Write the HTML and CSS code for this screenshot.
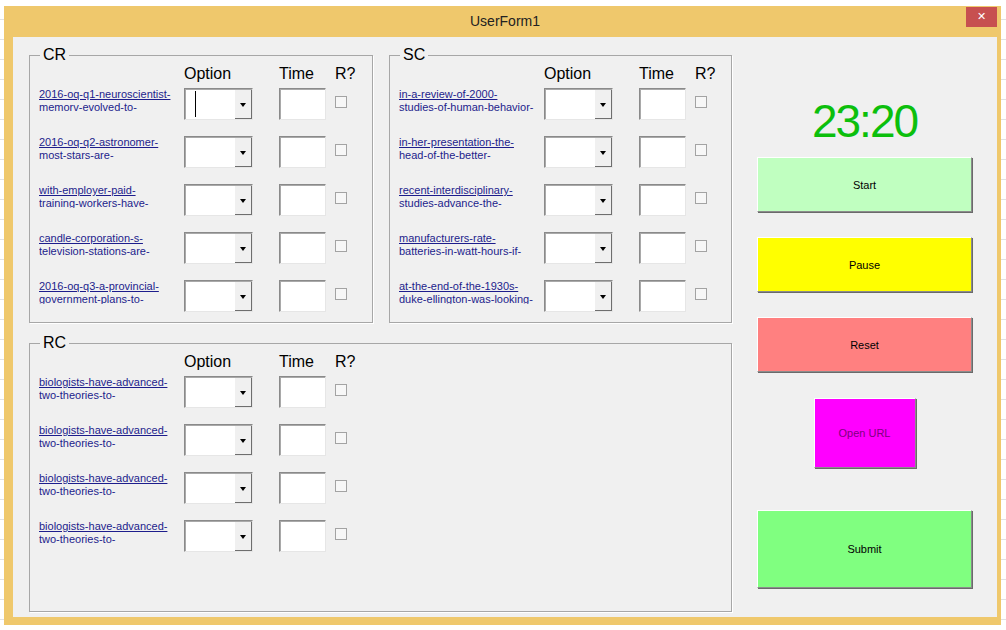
FILE: index.html
```html
<html>
  <head>
    <meta charset="utf-8" />
    <title>UserForm1</title>
    <link rel="stylesheet" href="styles.css">
  </head>
  <body>
    <div class="window">
      <div class="titlebar">
        <span></span>
        <span class="title">UserForm1</span>
        <button class="close">&#x2715;</button>
      </div>
      <div class="client">
        <div class="sections">
          <div class="top-row">
            <div class="frame frame-cr">
              <span class="frame-title">CR</span>
              <div class="qhead">
                <span></span><span>Option</span><span>Time</span><span>R?</span>
              </div>
              <div class="qrows">
                <div class="qrow">
                  <a class="qlink"><u>2016-oq-q1-neuroscientist-</u>memorv-evolved-to-</a>
                  <div class="combo"><span class="caret"></span><span class="drop"></span></div>
                  <div class="textbox"></div>
                  <div class="check"></div>
                </div>
                <div class="qrow">
                  <a class="qlink"><u>2016-oq-q2-astronomer-</u>most-stars-are-</a>
                  <div class="combo"><span></span><span class="drop"></span></div>
                  <div class="textbox"></div>
                  <div class="check"></div>
                </div>
                <div class="qrow">
                  <a class="qlink"><u>with-employer-paid-</u>training-workers-have-</a>
                  <div class="combo"><span></span><span class="drop"></span></div>
                  <div class="textbox"></div>
                  <div class="check"></div>
                </div>
                <div class="qrow">
                  <a class="qlink"><u>candle-corporation-s-</u>television-stations-are-</a>
                  <div class="combo"><span></span><span class="drop"></span></div>
                  <div class="textbox"></div>
                  <div class="check"></div>
                </div>
                <div class="qrow">
                  <a class="qlink"><u>2016-oq-q3-a-provincial-</u>government-plans-to-</a>
                  <div class="combo"><span></span><span class="drop"></span></div>
                  <div class="textbox"></div>
                  <div class="check"></div>
                </div>
              </div>
            </div>

            <div class="frame frame-sc">
              <span class="frame-title">SC</span>
              <div class="qhead">
                <span></span><span>Option</span><span>Time</span><span>R?</span>
              </div>
              <div class="qrows">
                <div class="qrow">
                  <a class="qlink"><u>in-a-review-of-2000-</u>studies-of-human-behavior-</a>
                  <div class="combo"><span></span><span class="drop"></span></div>
                  <div class="textbox"></div>
                  <div class="check"></div>
                </div>
                <div class="qrow">
                  <a class="qlink"><u>in-her-presentation-the-</u>head-of-the-better-</a>
                  <div class="combo"><span></span><span class="drop"></span></div>
                  <div class="textbox"></div>
                  <div class="check"></div>
                </div>
                <div class="qrow">
                  <a class="qlink"><u>recent-interdisciplinary-</u>studies-advance-the-</a>
                  <div class="combo"><span></span><span class="drop"></span></div>
                  <div class="textbox"></div>
                  <div class="check"></div>
                </div>
                <div class="qrow">
                  <a class="qlink"><u>manufacturers-rate-</u>batteries-in-watt-hours-if-</a>
                  <div class="combo"><span></span><span class="drop"></span></div>
                  <div class="textbox"></div>
                  <div class="check"></div>
                </div>
                <div class="qrow">
                  <a class="qlink"><u>at-the-end-of-the-1930s-</u>duke-ellington-was-looking-</a>
                  <div class="combo"><span></span><span class="drop"></span></div>
                  <div class="textbox"></div>
                  <div class="check"></div>
                </div>
              </div>
            </div>
          </div>

          <div class="frame frame-rc">
            <span class="frame-title">RC</span>
            <div class="qhead">
              <span></span><span>Option</span><span>Time</span><span>R?</span>
            </div>
            <div class="qrows">
              <div class="qrow">
                <a class="qlink"><u>biologists-have-advanced-</u>two-theories-to-</a>
                <div class="combo"><span></span><span class="drop"></span></div>
                <div class="textbox"></div>
                <div class="check"></div>
              </div>
              <div class="qrow">
                <a class="qlink"><u>biologists-have-advanced-</u>two-theories-to-</a>
                <div class="combo"><span></span><span class="drop"></span></div>
                <div class="textbox"></div>
                <div class="check"></div>
              </div>
              <div class="qrow">
                <a class="qlink"><u>biologists-have-advanced-</u>two-theories-to-</a>
                <div class="combo"><span></span><span class="drop"></span></div>
                <div class="textbox"></div>
                <div class="check"></div>
              </div>
              <div class="qrow">
                <a class="qlink"><u>biologists-have-advanced-</u>two-theories-to-</a>
                <div class="combo"><span></span><span class="drop"></span></div>
                <div class="textbox"></div>
                <div class="check"></div>
              </div>
            </div>
          </div>
        </div>

        <div class="controls">
          <div class="timer">23:20</div>
          <button class="btn start">Start</button>
          <button class="btn pause">Pause</button>
          <button class="btn reset">Reset</button>
          <button class="btn open-url">Open URL</button>
          <button class="btn submit">Submit</button>
        </div>
      </div>
    </div>
  </body>
</html>
```

FILE: styles.css
```css
body {
  margin: 0;
  background: repeating-linear-gradient(to bottom, #fff 0, #fff 19px, #e2e2e2 19px, #e2e2e2 20px);
  font-family: "Liberation Sans", Arial, sans-serif;
  overflow: hidden;
}
.window {
  margin: 6px 0 0 4px;
  width: 997px;
  height: 619px;
  box-sizing: border-box;
  background: #efc86c;
  padding: 0 4px 8px 9px;
}
.titlebar {
  display: grid;
  grid-template-columns: 1fr auto 1fr;
  height: 31px;
}
.title {
  font-size: 14px;
  color: #222;
  line-height: 31px;
}
.close {
  justify-self: end;
  width: 31px;
  height: 20px;
  margin-top: 1px;
  border: 0;
  padding: 0;
  background: #c75050;
  color: #fff;
  font-size: 11px;
  font-family: "DejaVu Sans", sans-serif;
  line-height: 20px;
}
.client {
  display: flex;
  height: 580px;
  background: #f0f0f0;
  padding: 18px 0 0 16px;
  box-sizing: border-box;
}
.top-row {
  display: flex;
  gap: 16px;
}
.frame {
  position: relative;
  box-sizing: border-box;
  border: 1px solid #a7a7a7;
  box-shadow: 1px 1px 0 #fff;
  padding-left: 9px;
}
.frame-cr {
  width: 344px;
  height: 268px;
}
.frame-sc {
  width: 343px;
  height: 268px;
}
.frame-rc {
  width: 703px;
  height: 269px;
  margin-top: 20px;
}
.frame-title {
  position: absolute;
  top: -10px;
  left: 10px;
  padding: 0 3px;
  background: #f0f0f0;
  font-size: 16px;
  line-height: 18px;
}
.qhead,
.qrow {
  display: grid;
  grid-template-columns: 145px 95px 56px 13px;
}
.qhead {
  margin-top: 8px;
  margin-bottom: 4px;
  font-size: 16px;
  line-height: 20px;
}
.qrows {
  display: flex;
  flex-direction: column;
  gap: 16px;
}
.qrow {
  height: 32px;
}
.qlink {
  display: block;
  height: 24px;
  overflow: hidden;
  font-size: 11px;
  line-height: 13px;
  color: #1d1d8c;
  white-space: nowrap;
}
.qlink u {
  display: block;
}
.combo,
.textbox {
  box-sizing: border-box;
  height: 32px;
  background: #fff;
  border: 1px solid;
  border-color: #8a8a8a #e6e6e6 #e6e6e6 #8a8a8a;
  box-shadow: inset 1px 1px 0 #a9a9a9;
}
.combo {
  width: 69px;
  display: flex;
  justify-content: space-between;
}
.textbox {
  width: 47px;
}
.caret {
  width: 1px;
  height: 26px;
  margin: 2px 0 0 10px;
  background: #000;
}
.drop {
  position: relative;
  width: 17px;
  margin-top: 1px;
  background: #f0f0f0;
  border-left: 1px solid #fff;
  box-shadow: inset -1px -1px 0 #6e6e6e;
}
.drop::after {
  content: "";
  position: absolute;
  left: 5px;
  top: 13px;
  border-left: 3px solid transparent;
  border-right: 3px solid transparent;
  border-top: 4px solid #000;
}
.check {
  width: 12px;
  height: 12px;
  margin-top: 8px;
  box-sizing: border-box;
  border: 1px solid #a3a3a3;
  background: #f7f7f7;
}
.controls {
  width: 215px;
  margin-left: 25px;
  padding-top: 41px;
  display: flex;
  flex-direction: column;
  align-items: center;
}
.timer {
  font-size: 46px;
  line-height: 50px;
  letter-spacing: -2px;
  color: #0cbf0c;
  margin-bottom: 11px;
}
.btn {
  width: 215px;
  height: 55px;
  margin-bottom: 25px;
  box-sizing: border-box;
  border: 1px solid;
  border-color: #fff #8c8c8c #8c8c8c #fff;
  box-shadow: 1px 1px 0 #6a6a6a;
  font-family: "Liberation Sans", Arial, sans-serif;
  font-size: 11px;
  color: #000;
  padding: 0;
}
.start {
  background: #c0ffc0;
}
.pause {
  background: #ffff00;
}
.reset {
  background: #ff8080;
  margin-bottom: 26px;
}
.open-url {
  width: 102px;
  height: 70px;
  background: #ff00ff;
  color: #800080;
  margin-bottom: 42px;
}
.submit {
  height: 78px;
  background: #80ff80;
}
```
